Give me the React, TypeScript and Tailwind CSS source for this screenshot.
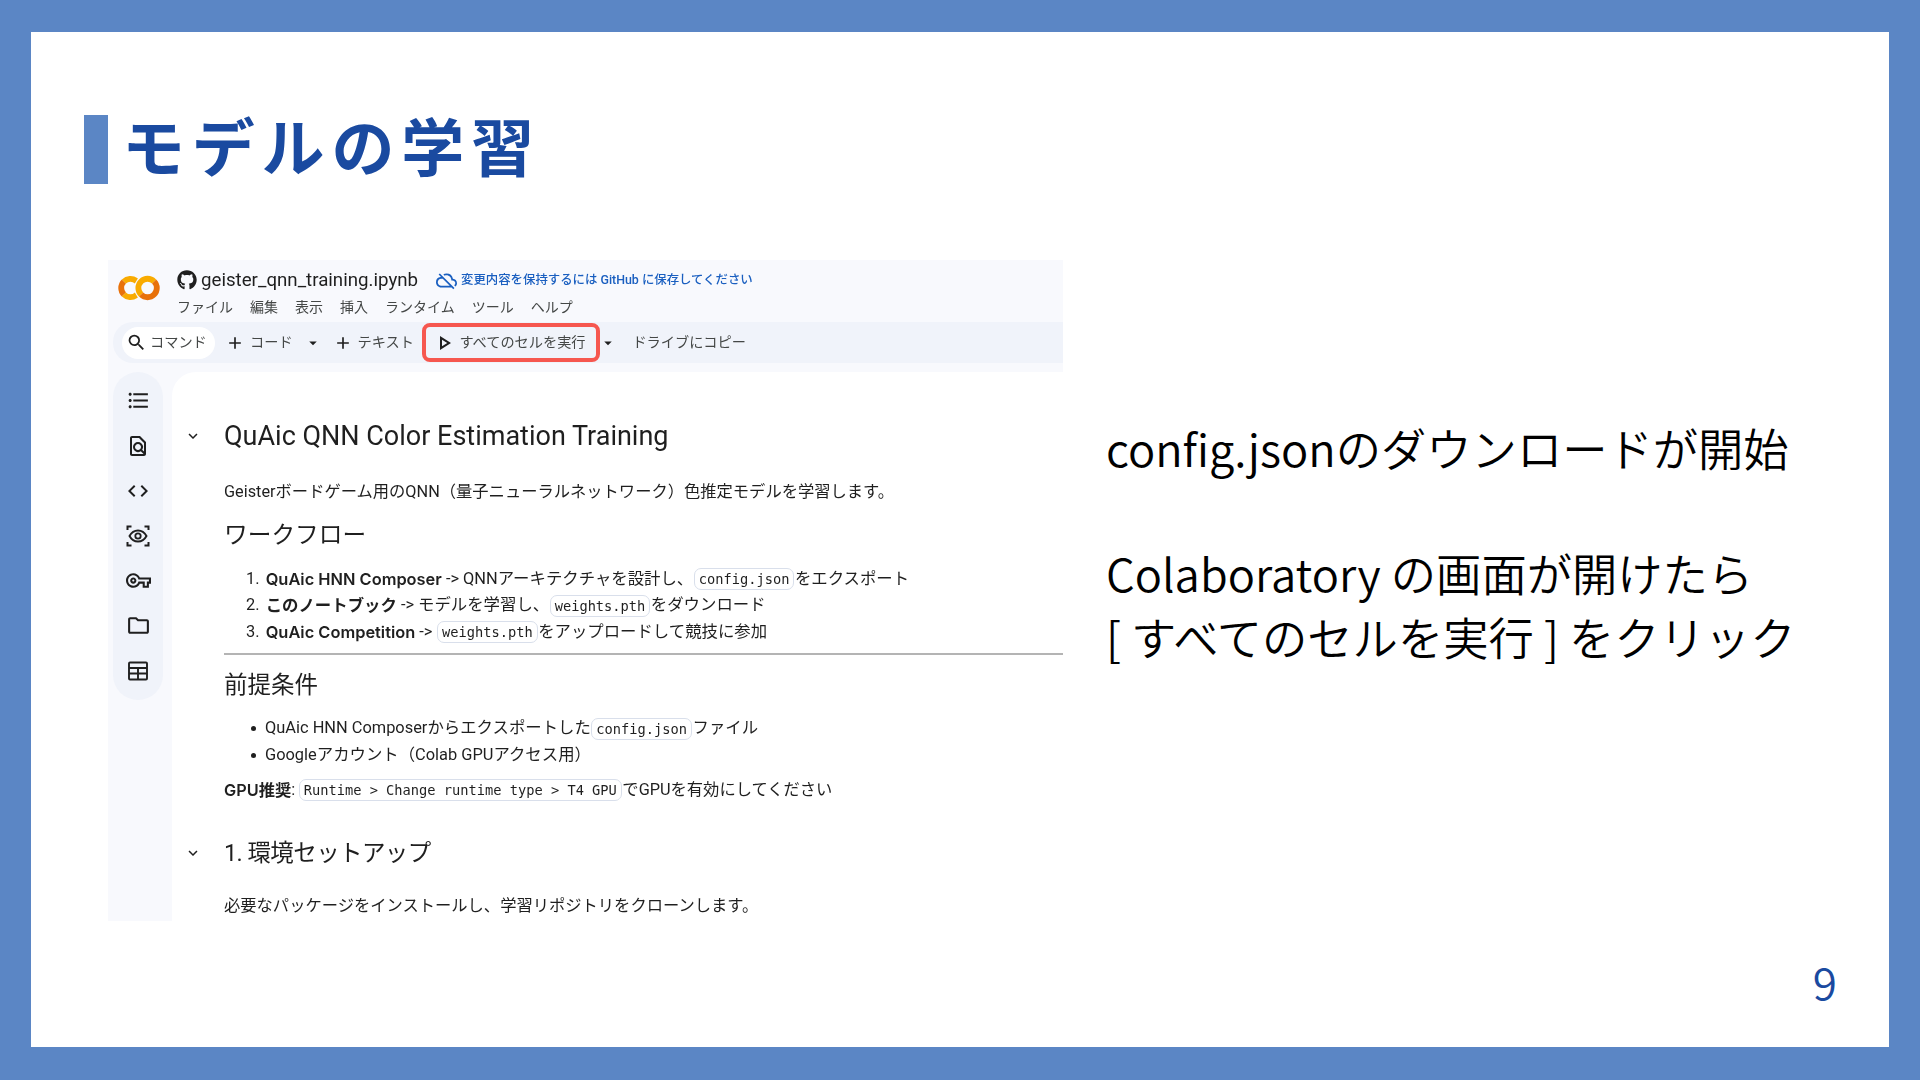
import React from "react";
import { FaGithub } from "react-icons/fa";
import {
  MdSearch, MdAdd, MdArrowDropDown, MdOutlinePlayArrow, MdOutlineCloudOff,
  MdFormatListBulleted, MdOutlineFindInPage, MdCode, MdOutlineVpnKey, MdOutlineFolder,
  MdExpandMore,
} from "react-icons/md";

const ColabLogo = () => (
  <svg viewBox="0 0 24 24" className="h-[42px] w-[42px]">
    <path d="M4.54,9.46,2.19,7.1a6.93,6.93,0,0,0,0,9.79l2.36-2.36A3.59,3.59,0,0,1,4.54,9.46Z" fill="#E8710A" />
    <path d="M2.19,7.1,4.54,9.46a3.59,3.59,0,0,1,5.08,0l1.71-2.93h0l-.1-.08h0A6.93,6.93,0,0,0,2.19,7.1Z" fill="#F9AB00" />
    <path d="M11.34,17.46h0L9.62,14.54a3.59,3.59,0,0,1-5.08,0L2.19,16.9a6.93,6.93,0,0,0,9,.65l.11-.09" fill="#F9AB00" />
    <path d="M12,7.1a6.93,6.93,0,0,0,0,9.79l2.36-2.36a3.59,3.59,0,1,1,5.08-5.08L21.81,7.1A6.93,6.93,0,0,0,12,7.1Z" fill="#F9AB00" />
    <path d="M21.81,7.1,19.46,9.46a3.59,3.59,0,0,1-5.08,5.08L12,16.9A6.93,6.93,0,0,0,21.81,7.1Z" fill="#E8710A" />
  </svg>
);

const EyeFocus = () => (
  <svg viewBox="0 0 24 24" className="h-[24px] w-[24px]" fill="none" stroke="#1f1f1f" strokeWidth="2">
    <path d="M1.500 6V2.500H5.500M18.500 2.500H22.500V6M22.500 18V21.500H18.500M5.500 21.500H1.500V18" />
    <path d="M3.500 12C5.500 8.300 8.500 6.500 12 6.500s6.500 1.800 8.500 5.500c-2 3.700-5 5.500-8.500 5.500S5.500 15.700 3.500 12Z" strokeWidth="1.900" />
    <circle cx="12" cy="12" r="2.700" strokeWidth="1.800" />
  </svg>
);

const TableIcon = () => (
  <svg viewBox="0 0 24 24" className="h-[24px] w-[24px]" fill="none" stroke="#1f1f1f" strokeWidth="1.900">
    <rect x="3" y="3.500" width="18" height="17" rx="1" />
    <path d="M3 9H21M3 14.500H21M12 9V20.500" />
  </svg>
);

const Code = ({ children }: { children: React.ReactNode }) => (
  <code className="mx-[0.500px] inline-block h-[22px] rounded-[7px] border border-[#d9dfeb] px-[4px] font-['DejaVu_Sans_Mono',monospace] text-[13.700px] leading-[21px] text-[#1f1f1f]">
    {children}
  </code>
);

const ToolText = ({ children }: { children: React.ReactNode }) => (
  <span className="block pb-[2px] text-[14.200px] leading-[20px] text-[#444746]">{children}</span>
);

const Bold = ({ children }: { children: React.ReactNode }) => (
  <b className="font-['Inter','Noto_Sans_CJK_JP',sans-serif] font-semibold">{children}</b>
);

const Num = ({ children }: { children: React.ReactNode }) => (
  <span className="w-[19.700px] shrink-0">{children}</span>
);

const sideIcons = [
  <MdFormatListBulleted key="a" size={25} />,
  <MdOutlineFindInPage key="b" size={24} />,
  <MdCode key="c" size={24} />,
  <EyeFocus key="d" />,
  <MdOutlineVpnKey key="e" size={25} />,
  <MdOutlineFolder key="f" size={25} />,
  <TableIcon key="g" />,
];

const menu = ["ファイル", "編集", "表示", "挿入", "ランタイム", "ツール", "ヘルプ"];

function Screenshot() {
  return (
    <div className="flex h-[661px] w-[955px] shrink-0 flex-col overflow-hidden bg-[#f8f9fd] font-['Roboto','Noto_Sans_CJK_JP',sans-serif] blur-[0.4px]">
      <div className="flex h-[62px] shrink-0">
        <div className="ml-[10px] mt-[7px] w-[59px] shrink-0"><ColabLogo /></div>
        <div className="flex flex-col pt-[8px]">
          <div className="flex h-[24px] items-center">
            <FaGithub size={20} className="text-[#1f1f1f]" />
            <span className="ml-[4px] text-[18.700px] leading-[24px] text-[#1f1f1f]">geister_qnn_training.ipynb</span>
            <MdOutlineCloudOff size={21} className="ml-[18px] text-[#1a5fc0]" />
            <span className="ml-[4px] text-[12.400px] font-medium leading-[24px] text-[#1a5fc0]">変更内容を保持するには GitHub に保存してください</span>
          </div>
          <div className="mt-[5px] flex h-[20px] items-center gap-[17px]">
            {menu.map((m) => (
              <span key={m} className="text-[14px] leading-[20px] text-[#444746]">{m}</span>
            ))}
          </div>
        </div>
      </div>

      <div className="ml-[5px] flex h-[41px] shrink-0 items-center rounded-l-[20px] bg-[#f0f3fa]">
        <div className="ml-[9px] flex h-[32px] w-[93px] items-center rounded-full bg-white">
          <MdSearch size={21} className="ml-[4px] text-[#1f1f1f]" />
          <span className="ml-[3px]"><ToolText>コマンド</ToolText></span>
        </div>
        <MdAdd size={20} className="ml-[10px] text-[#1f1f1f]" />
        <span className="ml-[5px]"><ToolText>コード</ToolText></span>
        <MdArrowDropDown size={18} className="ml-[11px] text-[#1f1f1f]" />
        <MdAdd size={20} className="ml-[11px] text-[#1f1f1f]" />
        <span className="ml-[5px]"><ToolText>テキスト</ToolText></span>
        <div className="ml-[8.500px] flex h-[39px] w-[178px] shrink-0 items-center rounded-[8px] border-[4px] border-[#f6574f]">
          <MdOutlinePlayArrow size={24} className="ml-[6px] shrink-0 text-[#1f1f1f]" />
          <span className="ml-[3px] whitespace-nowrap"><ToolText>すべてのセルを実行</ToolText></span>
        </div>
        <MdArrowDropDown size={18} className="ml-[-1px] text-[#1f1f1f]" />
        <span className="ml-[15px]"><ToolText>ドライブにコピー</ToolText></span>
      </div>

      <div className="mt-[9px] flex min-h-0 flex-1">
        <div className="ml-[5px] flex h-[328px] w-[50px] shrink-0 flex-col items-center rounded-full bg-[#f0f3fa] pt-[6px]">
          {sideIcons.map((ic, i) => (
            <div key={i} className="flex h-[45px] w-full items-center justify-center text-[#1f1f1f]">{ic}</div>
          ))}
        </div>
        <div className="ml-[9px] flex-1 rounded-tl-[24px] bg-white pt-[44px] text-[#1f1f1f]">
          <div className="flex h-[40px] items-center">
            <div className="mr-[10px] flex w-[42px] justify-center"><MdExpandMore size={18} /></div>
            <h1 className="text-[27px] leading-[40px]">QuAic QNN Color Estimation Training</h1>
          </div>
          <div className="pl-[52px]">
            <p className="mt-[23px] text-[16.300px] leading-[26px]">Geisterボードゲーム用のQNN（量子ニューラルネットワーク）色推定モデルを学習します。</p>
            <h2 className="mt-[12px] text-[23.700px] leading-[36px]">ワークフロー</h2>
            <ol className="mt-[13px] text-[16.400px]">
              <li className="flex h-[26.500px] items-center whitespace-pre pl-[22px]"><Num>1.</Num><Bold>QuAic HNN Composer</Bold> -&gt; QNNアーキテクチャを設計し、<Code>config.json</Code>をエクスポート</li>
              <li className="flex h-[26.500px] items-center whitespace-pre pl-[22px]"><Num>2.</Num><Bold>このノートブック</Bold> -&gt; モデルを学習し、<Code>weights.pth</Code>をダウンロード</li>
              <li className="flex h-[26.500px] items-center whitespace-pre pl-[22px]"><Num>3.</Num><Bold>QuAic Competition</Bold> -&gt; <Code>weights.pth</Code>をアップロードして競技に参加</li>
            </ol>
          </div>
          <div className="ml-[52px] mt-[7px] h-[2px] bg-[#b4b4b4]" />
          <div className="pl-[52px]">
            <h2 className="mt-[12px] text-[23.500px] leading-[36px]">前提条件</h2>
            <ul className="mt-[13px] text-[16.400px]">
              <li className="flex h-[26px] items-center whitespace-pre pl-[27px]">
                <span className="mr-[9px] h-[5px] w-[5px] rounded-full bg-[#1f1f1f]" />QuAic HNN Composerからエクスポートした<Code>config.json</Code>ファイル
              </li>
              <li className="mt-[0.500px] flex h-[26px] items-center whitespace-pre pl-[27px]">
                <span className="mr-[9px] h-[5px] w-[5px] rounded-full bg-[#1f1f1f]" />Googleアカウント（Colab GPUアクセス用）
              </li>
            </ul>
            <p className="mt-[9px] flex h-[26px] items-center whitespace-pre text-[16.300px]"><Bold>GPU推奨</Bold>:<span className="w-[3px]" /><Code>Runtime &gt; Change runtime type &gt; T4 GPU</Code>でGPUを有効にしてください</p>
          </div>
          <div className="mt-[31.500px] flex h-[36px] items-center">
            <div className="mr-[10px] flex w-[42px] justify-center"><MdExpandMore size={18} /></div>
            <h2 className="text-[23.500px] leading-[36px] tracking-[-0.600px]">1. 環境セットアップ</h2>
          </div>
          <p className="mt-[22px] pl-[52px] text-[16.300px] leading-[26px]">必要なパッケージをインストールし、学習リポジトリをクローンします。</p>
        </div>
      </div>
    </div>
  );
}

export default function App() {
  return (
    <div className="h-[1080px] w-[1920px] overflow-hidden bg-[#5b86c5] pl-[31px] pt-[32px] font-['Noto_Sans_CJK_JP',sans-serif]">
      <div className="flex h-[1015px] w-[1858px] flex-col bg-white">
        <div className="ml-[53px] mt-[83px] flex h-[69px] items-center">
          <div className="h-[69px] w-[24px] shrink-0 bg-[#5b86c5]" />
          <h1 className="mb-[12px] ml-[14px] text-[63px] font-bold leading-[69px] tracking-[6.800px] text-[#1a4aa0]">モデルの学習</h1>
        </div>
        <div className="ml-[77px] mt-[76px] flex">
          <Screenshot />
          <div className="ml-[43px] pt-[155px] text-[45.300px] font-[350] leading-[64px] text-black">
            <p>config.jsonのダウンロードが開始</p>
            <p className="mt-[61px]">Colaboratory の画面が開けたら</p>
            <p>[ すべてのセルを実行 ] をクリック</p>
          </div>
        </div>
        <div className="flex justify-end pr-[52px] pt-[28px] text-[44px] font-[350] leading-[64px] text-[#1a4aa0]">9</div>
      </div>
    </div>
  );
}
